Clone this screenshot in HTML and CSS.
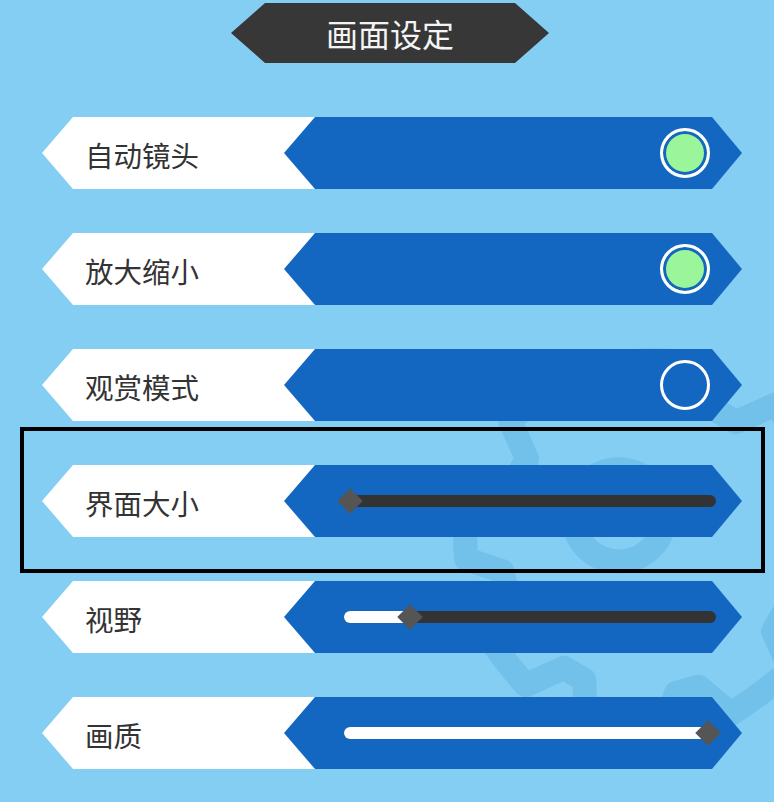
FILE: index.html
```html
<!DOCTYPE html>
<html lang="zh-CN">
<head>
<meta charset="utf-8">
<title>画面设定</title>
<link rel="stylesheet" href="styles.css">
</head>
<body>
<div class="page">
  <svg class="bg-deco" width="774" height="802" viewBox="0 0 774 802" aria-hidden="true">
    <g transform="translate(650 545) rotate(8)" fill="none" stroke="#6dbee9" stroke-width="24" stroke-linejoin="round">
      <path d="M142.7 -46.4 L180 -39.5 Q190 0 180 39.5 L142.7 46.4 L133.7 68.1 L156 103.6 Q132 132 103.6 156 L68.1 133.7 L46.4 142.7 L39.5 180 Q0 190 -39.5 180 L-46.4 142.7 L-68.1 133.7 L-103.6 156 Q-132 132 -156 103.6 L-133.7 68.1 L-142.7 46.4 L-180 39.5 Q-190 0 -180 -39.5 L-142.7 -46.4 L-133.7 -68.1 L-156 -103.6 Q-132 -132 -103.6 -156 L-68.1 -133.7 L-46.4 -142.7 L-39.5 -180 Q0 -190 39.5 -180 L46.4 -142.7 L68.1 -133.7 L103.6 -156 Q132 -132 156 -103.6 L133.7 -68.1 Z"/>
      <circle cx="-35" cy="-25" r="46"/>
    </g>
  </svg>

  <header class="title-wrap">
    <div class="title">画面设定</div>
  </header>

  <main class="list">
    <div class="row">
      <div class="label">自动镜头</div>
      <div class="control control-toggle"><span class="toggle on"></span></div>
    </div>
    <div class="row">
      <div class="label">放大缩小</div>
      <div class="control control-toggle"><span class="toggle on"></span></div>
    </div>
    <div class="row">
      <div class="label">观赏模式</div>
      <div class="control control-toggle"><span class="toggle"></span></div>
    </div>
    <div class="row selected">
      <div class="label">界面大小</div>
      <div class="control control-slider">
        <div class="track"><div class="fill" style="width:6px"></div><div class="knob" style="left:6px"></div></div>
      </div>
    </div>
    <div class="row">
      <div class="label">视野</div>
      <div class="control control-slider">
        <div class="track"><div class="fill" style="width:66px"></div><div class="knob" style="left:66px"></div></div>
      </div>
    </div>
    <div class="row">
      <div class="label">画质</div>
      <div class="control control-slider">
        <div class="track"><div class="fill" style="width:372px"></div><div class="knob" style="left:364px"></div></div>
      </div>
    </div>
  </main>
</div>
</body>
</html>
```

FILE: styles.css
```css
html, body {
  margin: 0;
  padding: 0;
}

body {
  width: 774px;
  height: 802px;
  overflow: hidden;
  background: #84cef4;
  font-family: "Noto Sans CJK SC", "Noto Sans", "DejaVu Sans", sans-serif;
}

.page {
  position: relative;
  width: 774px;
  height: 802px;
}

.bg-deco {
  position: absolute;
  left: 0;
  top: 0;
  z-index: 0;
  opacity: 0.8;
}

.title-wrap {
  position: relative;
  z-index: 1;
  display: flex;
  justify-content: center;
  padding-top: 3px;
  padding-left: 6px;
}

.title {
  width: 318px;
  height: 60px;
  background: #373737;
  color: #f4f4f4;
  font-size: 32px;
  line-height: 60px;
  text-align: center;
  clip-path: polygon(34px 0, calc(100% - 34px) 0, 100% 50%, calc(100% - 34px) 100%, 34px 100%, 0 50%);
}

.list {
  position: relative;
  z-index: 1;
  display: flex;
  flex-direction: column;
  gap: 44px;
  margin-top: 54px;
  padding-left: 42px;
}

.row {
  display: flex;
  height: 72px;
}

.row.selected {
  position: relative;
}

.row.selected::after {
  content: "";
  position: absolute;
  left: -22px;
  top: -38px;
  width: 745px;
  height: 146px;
  border: 4px solid #000;
  box-sizing: border-box;
  pointer-events: none;
}

.label {
  width: 273px;
  height: 72px;
  box-sizing: border-box;
  padding-left: 43px;
  padding-top: 2px;
  display: flex;
  align-items: center;
  background: #fff;
  color: #333;
  font-size: 28.5px;
  clip-path: polygon(31px 0, 100% 0, 100% 100%, 31px 100%, 0 50%);
}

.control {
  width: 458px;
  height: 72px;
  margin-left: -31px;
  box-sizing: border-box;
  background: #1467c1;
  display: flex;
  align-items: center;
  clip-path: polygon(31px 0, calc(100% - 30px) 0, 100% 50%, calc(100% - 30px) 100%, 31px 100%, 0 50%);
}

.control-toggle {
  justify-content: flex-end;
  padding-right: 32px;
}

.toggle {
  width: 50px;
  height: 50px;
  box-sizing: border-box;
  border: 3px solid #fff;
  border-radius: 50%;
}

.toggle.on {
  background: #9bf59b;
  box-shadow: inset 0 0 0 3px #1467c1;
}

.control-slider {
  padding-left: 60px;
  padding-right: 26px;
}

.track {
  position: relative;
  flex: 1;
  height: 12px;
  border-radius: 6px;
  background: #333;
}

.fill {
  position: absolute;
  left: 0;
  top: 0;
  height: 12px;
  border-radius: 6px;
  background: #fff;
}

.knob {
  position: absolute;
  top: 50%;
  width: 18px;
  height: 18px;
  margin-left: -9px;
  margin-top: -9px;
  background: #555;
  transform: rotate(45deg);
}
```
